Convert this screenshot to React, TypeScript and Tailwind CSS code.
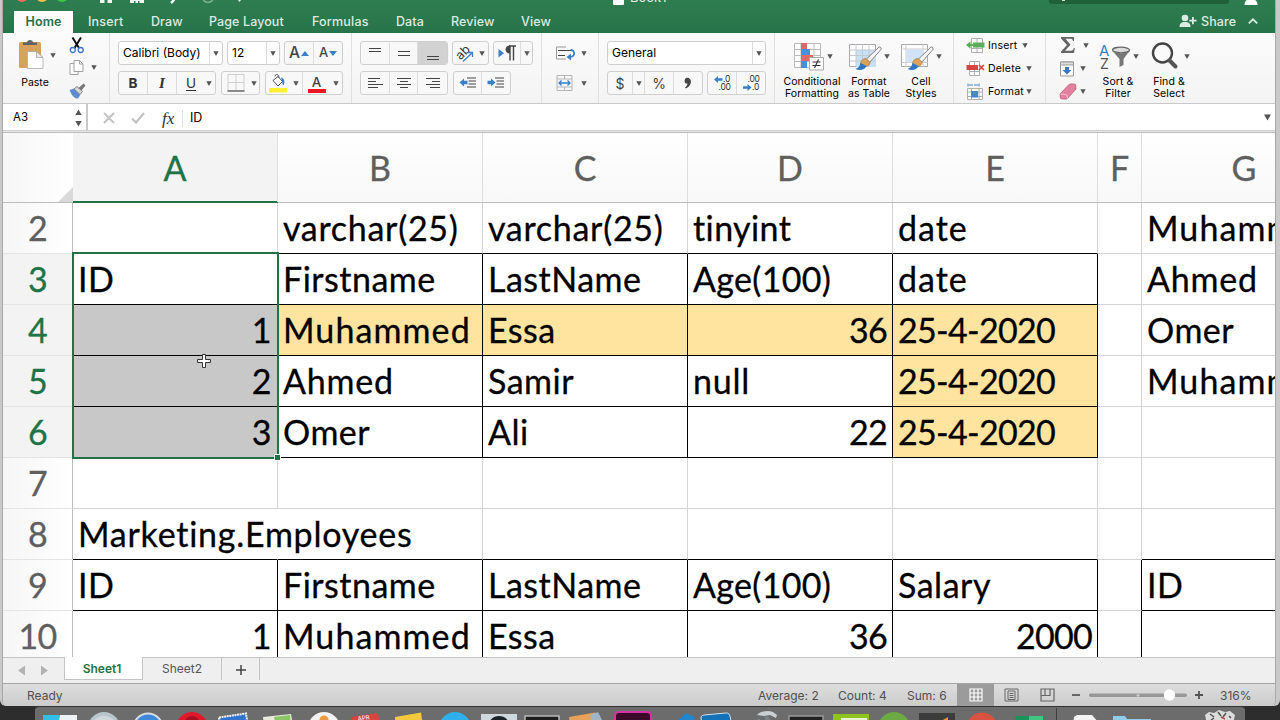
import type { ReactNode } from "react";
import clsx from "clsx";

type CellData = {
  text?: string;
  right?: boolean;
  fill?: string;
  line?: string;
};

const GRAY = "border-r-[#d4d4d4] border-b-[#d4d4d4]";
const BLACK = "border-r-black border-b-black";
const BOTTOM = "border-r-[#d4d4d4] border-b-black";
const SIDE = "border-r-black border-b-[#d4d4d4]";
const OPEN = "border-r-transparent border-b-black";
const YELLOW = "bg-[#ffe4a0]";
const SELECTED = "bg-[#c8c8c8]";

const columns = [
  { name: "A", width: "w-[205px]", active: true },
  { name: "B", width: "w-[205px]" },
  { name: "C", width: "w-[205px]" },
  { name: "D", width: "w-[205px]" },
  { name: "E", width: "w-[205px]" },
  { name: "F", width: "w-[44px]" },
  { name: "G", width: "w-[205px]" },
];

// letter spacing per value, everything else uses the default below
const tracking: Record<string, string> = {
  Muhammed: "tracking-[1.1px]",
  Ahmed: "tracking-[0.8px]",
  date: "tracking-[1px]",
  null: "tracking-[0.8px]",
  "Marketing.Employees": "tracking-[0.75px]",
  "varchar(25)": "tracking-[0.7px]",
  tinyint: "tracking-[0.4px]",
  "Age(100)": "tracking-[0.3px]",
  "25-4-2020": "tracking-[-0.7px]",
  "2000": "tracking-[-0.7px]",
  "36": "tracking-[-0.7px]",
  "22": "tracking-[-0.7px]",
};

const rows: { n: number; active?: boolean; cells: CellData[] }[] = [
  {
    n: 2,
    cells: [
      { line: BOTTOM },
      { text: "varchar(25)", line: BOTTOM },
      { text: "varchar(25)", line: BOTTOM },
      { text: "tinyint", line: BOTTOM },
      { text: "date", line: BOTTOM },
      {},
      { text: "Muhammed" },
    ],
  },
  {
    n: 3,
    active: true,
    cells: [
      { text: "ID", line: BLACK },
      { text: "Firstname", line: BLACK },
      { text: "LastName", line: BLACK },
      { text: "Age(100)", line: BLACK },
      { text: "date", line: BLACK },
      {},
      { text: "Ahmed" },
    ],
  },
  {
    n: 4,
    active: true,
    cells: [
      { text: "1", right: true, fill: SELECTED, line: BLACK },
      { text: "Muhammed", fill: YELLOW, line: BLACK },
      { text: "Essa", fill: YELLOW, line: BLACK },
      { text: "36", right: true, fill: YELLOW, line: BLACK },
      { text: "25-4-2020", fill: YELLOW, line: BLACK },
      {},
      { text: "Omer" },
    ],
  },
  {
    n: 5,
    active: true,
    cells: [
      { text: "2", right: true, fill: SELECTED, line: BLACK },
      { text: "Ahmed", line: BLACK },
      { text: "Samir", line: BLACK },
      { text: "null", line: BLACK },
      { text: "25-4-2020", fill: YELLOW, line: BLACK },
      {},
      { text: "Muhammed" },
    ],
  },
  {
    n: 6,
    active: true,
    cells: [
      { text: "3", right: true, fill: SELECTED, line: BLACK },
      { text: "Omer", line: BLACK },
      { text: "Ali", line: BLACK },
      { text: "22", right: true, line: BLACK },
      { text: "25-4-2020", fill: YELLOW, line: BLACK },
      {},
      {},
    ],
  },
  { n: 7, cells: [{}, {}, {}, {}, {}, {}, {}] },
  {
    n: 8,
    cells: [
      { text: "Marketing.Employees", line: OPEN },
      { line: BOTTOM },
      { line: BOTTOM },
      { line: BOTTOM },
      { line: BOTTOM },
      {},
      { line: BOTTOM },
    ],
  },
  {
    n: 9,
    cells: [
      { text: "ID", line: BLACK },
      { text: "Firstname", line: BLACK },
      { text: "LastName", line: BLACK },
      { text: "Age(100)", line: BLACK },
      { text: "Salary", line: BLACK },
      { line: SIDE },
      { text: "ID", line: BLACK },
    ],
  },
  {
    n: 10,
    cells: [
      { text: "1", right: true, line: BLACK },
      { text: "Muhammed", line: BLACK },
      { text: "Essa", line: BLACK },
      { text: "36", right: true, line: BLACK },
      { text: "2000", right: true, line: BLACK },
      { line: SIDE },
      { line: BLACK },
    ],
  },
];

const Caret = ({ className }: { className?: string }) => (
  <svg viewBox="0 0 6 5" className={clsx("h-[5px] w-[6px] shrink-0", className)}>
    <path d="M0.3 0.3h5.4L3 4.9z" fill="#555" />
  </svg>
);

const Box = ({ className, children }: { className?: string; children: ReactNode }) => (
  <div
    className={clsx(
      "flex h-6 shrink-0 items-stretch overflow-hidden rounded-[3px] border border-[#cfcfcf] bg-[#f8f8f8]",
      className
    )}
  >
    {children}
  </div>
);

const Slot = ({ className, children }: { className?: string; children: ReactNode }) => (
  <div className={clsx("flex shrink-0 items-center justify-center border-[#dcdcdc]", className)}>
    {children}
  </div>
);

const Lines = ({ d }: { d: string }) => (
  <svg viewBox="0 0 16 16" className="h-4 w-4" fill="none" stroke="#444" strokeWidth="1.1">
    <path d={d} />
  </svg>
);

const TitleBar = () => (
  <div className="h-[11px] overflow-hidden">
    <div className="-mt-[11px] flex h-[22px] items-start">
      <div className="flex w-[97px] shrink-0 gap-2 pt-[1px] pl-[13px]">
        <span className="h-3 w-3 rounded-full bg-[#ee6a5f]" />
        <span className="h-3 w-3 rounded-full bg-[#f5bd4f]" />
        <span className="h-3 w-3 rounded-full bg-[#3ec544]" />
      </div>
      <svg viewBox="0 0 150 15" className="h-[15px] w-[150px] shrink-0" fill="#f2f7f3">
        <path d="M0 3h12v11H7.500V10H4.500v4H0z" />
        <path d="M30 3h14v11H30zM34 12h1.500v2H34zM38 12h1.500v2H38z" fillRule="evenodd" />
        <path d="M69 4c6 0 8 5 2 10" fill="none" stroke="#f2f7f3" strokeWidth="2.500" />
        <circle cx="108" cy="8" r="5.500" fill="none" stroke="#7fae92" strokeWidth="1.500" />
        <path d="M138 11h3l-1.500 2z" />
      </svg>
      <div className="ml-[363px] flex w-[100px] shrink-0 items-center gap-[6px]">
        <span className="h-[14px] w-[11px] rounded-[1px] bg-white" />
        <span className="text-[13px] leading-[17px] text-[#e6f0ea]">Book1</span>
      </div>
      <div className="ml-[336px] flex h-[15px] w-[180px] shrink-0 items-end rounded-b-[3px] bg-[#1f6039] pl-[13px]">
        <span className="mb-[3px] h-[2px] w-[3px] bg-[#cfe3d6]" />
        <span className="pl-[12px] text-[12.500px] leading-[16px] text-[#6fa085]">Search Sheet</span>
      </div>
      <svg viewBox="0 0 14 16" className="ml-[15px] h-4 w-[14px] shrink-0" fill="#fff">
        <circle cx="7" cy="6" r="4" />
        <path d="M0.500 16c0-4 2.500-6 6.500-6s6.500 2 6.500 6z" />
      </svg>
    </div>
  </div>
);

const TabBar = () => (
  <div className="flex h-[22px] items-stretch pl-[11px] text-[12.500px] leading-[21px] font-medium tracking-[0.1px] text-[#dcebe1]">
    <div className="w-[59px] shrink-0 bg-[#fbfbfb] text-center font-semibold text-[#25704a]">Home</div>
    <span className="ml-[15px] w-[63px] tracking-[0.2px]">Insert</span>
    <span className="w-[58px]">Draw</span>
    <span className="w-[103px] whitespace-nowrap">Page Layout</span>
    <span className="w-[84px] tracking-[0.2px]">Formulas</span>
    <span className="w-[55px]">Data</span>
    <span className="w-[70px]">Review</span>
    <span className="w-[60px]">View</span>
    <svg viewBox="0 0 18 14" className="mt-[3px] ml-[598px] h-[14px] w-[18px] shrink-0" fill="#dcebe1">
      <circle cx="6" cy="4" r="3.300" />
      <path d="M0.500 13c0-3.500 1.500-5 5.500-5s5.500 1.500 5.500 5z" />
      <path d="M13 3h1.800v2.700H17.500v1.800h-2.700v2.700H13V7.500h-2.700V5.700H13z" />
    </svg>
    <span className="ml-[4px] w-[36px] text-[12.500px]">Share</span>
    <svg viewBox="0 0 10 6" className="mt-[7px] ml-[11px] h-[6px] w-[10px] shrink-0" fill="none" stroke="#dcebe1" strokeWidth="1.800">
      <path d="M0.800 5.300L5 1.300l4.200 4" />
    </svg>
  </div>
);

const ClipboardGroup = () => (
  <div className="flex w-[107px] shrink-0 border-r border-[#e0e0e0] pt-[4px] pl-[14px]">
    <div className="flex w-[36px] flex-col items-center">
      <svg viewBox="0 0 26 32" className="-ml-[8px] h-8 w-[26px]">
        <rect x="1" y="5" width="22" height="26" rx="1.500" fill="#d9a25c" />
        <path d="M5 8V5.500h4C9 2 15 2 15 5.500h4V8z" fill="#636363" />
        <path d="M9.500 14.500h9l6.500 6v11H9.500z" fill="#fff" stroke="#a9a9a9" strokeWidth=".8" />
        <path d="M18.500 14.500v6H25z" fill="#e8e8e8" stroke="#a9a9a9" strokeWidth=".8" />
      </svg>
      <span className="mt-[7px] text-[10.500px] leading-[14px]">Paste</span>
    </div>
    <Caret className="mt-[16px] -ml-[3px]" />
    <div className="ml-[13px] flex w-[18px] flex-col">
      <svg viewBox="0 0 16 17" className="h-[17px] w-4" fill="none">
        <path d="M3.500 0.500L10 11M12 0.500L5.500 11" stroke="#111" strokeWidth="2" />
        <circle cx="3.800" cy="13" r="2.500" stroke="#3f74c4" strokeWidth="1.300" />
        <circle cx="11.700" cy="13" r="2.500" stroke="#3f74c4" strokeWidth="1.300" />
      </svg>
      <svg viewBox="0 0 15 16" className="mt-[6px] h-4 w-[15px]" fill="#fff" stroke="#999" strokeWidth=".9">
        <path d="M1 3.500h5l3 3v8H1z" />
        <path d="M5 0.500h5.500l3.500 3.500v7.500H5z" />
        <path d="M10.500 0.500v3.500H14" fill="none" />
      </svg>
      <svg viewBox="0 0 17 16" className="mt-[7px] h-4 w-[17px]">
        <path d="M0.500 7l4.500-1.500 6.500 6-2.500 4c-3 .5-6.500-3-8.500-8.500z" fill="#5b8fcf" />
        <path d="M5 6l3-2.500 5.500 5L11 11.500z" fill="#d8d8d8" stroke="#777" strokeWidth=".9" />
        <path d="M9.500 5L14.500 .5l2 2-4 5z" fill="#777" />
      </svg>
    </div>
    <Caret className="mt-[28px] ml-[4px]" />
  </div>
);

const FontGroup = () => (
  <div className="flex w-[242px] shrink-0 flex-col gap-[6px] border-r border-[#e0e0e0] pt-[8px] pl-[8px]">
    <div className="flex gap-[4px]">
      <Box className="w-[105px] border-[#bdbdbd] bg-white">
        <span className="w-[90px] pl-[4px] text-[12px] leading-[22px] whitespace-nowrap">Calibri (Body)</span>
        <Slot className="w-[13px] border-l">
          <Caret />
        </Slot>
      </Box>
      <Box className="w-[53px] border-[#bdbdbd] bg-white">
        <span className="w-[38px] pl-[4px] text-[12px] leading-[22px]">12</span>
        <Slot className="w-[13px] border-l">
          <Caret />
        </Slot>
      </Box>
      <Box className="w-[59px]">
        <Slot className="w-[29px] gap-[1px] border-r text-[15.500px] font-medium text-[#444]">
          A
          <svg viewBox="0 0 8 5" className="h-[5px] w-2">
            <path d="M0 5h8L4 0z" fill="#3a80c9" />
          </svg>
        </Slot>
        <Slot className="w-[28px] gap-[1px] text-[13px] font-medium text-[#444]">
          A
          <svg viewBox="0 0 8 5" className="h-[5px] w-2">
            <path d="M0 0h8L4 5z" fill="#3a80c9" />
          </svg>
        </Slot>
      </Box>
    </div>
    <div className="flex gap-[5px]">
      <Box className="w-[98px] text-[13.500px] text-[#333]">
        <Slot className="w-[29px] border-r font-bold">B</Slot>
        <Slot className="w-[29px] border-r font-['Liberation_Serif'] text-[15px] font-bold italic">I</Slot>
        <Slot className="w-[28px] underline underline-offset-2">U</Slot>
        <Slot className="w-[10px] pr-[2px]">
          <Caret />
        </Slot>
      </Box>
      <Box className="w-[39px]">
        <Slot className="w-[27px]">
          <svg viewBox="0 0 18 18" className="h-[18px] w-[18px]" fill="none" stroke="#cfcfcf">
            <path d="M1 16.500V.5h16v16M9 .5v16M1 8.500h16" />
            <path d="M0.500 17h17" stroke="#666" strokeWidth="1.400" />
          </svg>
        </Slot>
        <Slot className="w-[10px]">
          <Caret />
        </Slot>
      </Box>
      <Box className="w-[78px]">
        <Slot className="w-[24px]">
          <svg viewBox="0 0 20 20" className="h-5 w-5">
            <path d="M5 7.500l5-4 4.500 5-4.500 4.500z" fill="#fff" stroke="#555" strokeWidth="1" />
            <path d="M7 3.500c0-3 4-3 4 1.500" fill="none" stroke="#555" />
            <path d="M13 4.500c3 .5 4.500 4 2.500 8-1.500-1-1-3-1.500-4.500z" fill="#3a7cc4" />
            <rect x="1" y="15" width="18" height="4.500" fill="#fdf22d" />
          </svg>
        </Slot>
        <Slot className="w-[13px] border-r">
          <Caret />
        </Slot>
        <Slot className="w-[27px] flex-col pt-[1px]">
          <span className="text-[13.500px] leading-[14px] font-medium text-[#444]">A</span>
          <span className="h-[4px] w-[18px] bg-[#ee1322]" />
        </Slot>
        <Slot className="w-[12px]">
          <Caret />
        </Slot>
      </Box>
    </div>
  </div>
);

const AlignGroup = () => (
  <div className="flex w-[190px] shrink-0 flex-col gap-[6px] border-r border-[#e0e0e0] pt-[8px] pl-[8px]">
    <div className="flex gap-[4px]">
      <Box className="w-[88px]">
        <Slot className="w-[29px] border-r">
          <Lines d="M2 3.500h12M2 6.500h12" />
        </Slot>
        <Slot className="w-[28px] border-r">
          <Lines d="M2 6.500h12M2 10.500h12" />
        </Slot>
        <Slot className="w-[29px] bg-[#d2d2d2]">
          <Lines d="M2 11.500h12M2 14.500h12" />
        </Slot>
      </Box>
      <Box className="w-[37px]">
        <Slot className="w-[23px]">
          <svg viewBox="0 0 20 20" className="h-5 w-5">
            <text x="1" y="13.500" transform="rotate(-45 8 10)" fontSize="12.500" fill="#333">
              ab
            </text>
            <path d="M8 18.500l9-8.500M13 9.500h4.500v4.500" fill="none" stroke="#3a80c9" strokeWidth="1.300" />
          </svg>
        </Slot>
        <Slot className="w-[12px]">
          <Caret />
        </Slot>
      </Box>
      <Box className="w-[40px]">
        <Slot className="w-[27px] border-r">
          <svg viewBox="0 0 20 18" className="h-[18px] w-5">
            <path d="M1.500 5v8.500L7 9.300z" fill="#3a80c9" />
            <path d="M13 2v14.500M16.500 2v14.500M12 2h7" stroke="#444" strokeWidth="1.400" fill="none" />
            <path d="M13 1.500c-6 0-6 8 0 8z" fill="#444" />
          </svg>
        </Slot>
        <Slot className="w-[11px]">
          <Caret />
        </Slot>
      </Box>
    </div>
    <div className="flex gap-[5px]">
      <Box className="w-[88px]">
        <Slot className="w-[29px] border-r">
          <Lines d="M1 3.500h12M1 6.500h8M1 9.500h15M1 12.500h10" />
        </Slot>
        <Slot className="w-[28px] border-r">
          <Lines d="M1 3.500h14M4 6.500h8M1 9.500h14M4 12.500h8" />
        </Slot>
        <Slot className="w-[29px]">
          <Lines d="M1 3.500h14M7 6.500h8M1 9.500h14M5 12.500h10" />
        </Slot>
      </Box>
      <Box className="w-[58px]">
        <Slot className="w-[28px] border-r">
          <svg viewBox="0 0 18 14" className="h-[14px] w-[18px]">
            <path d="M8 2h9M9.500 5h7.500M9.500 8h7.500M8 11h9" stroke="#444" strokeWidth="1.100" />
            <path d="M0.500 6.500L5 2.500v2.300h3.500v3.400H5v2.300z" fill="#3a80c9" />
          </svg>
        </Slot>
        <Slot className="w-[28px]">
          <svg viewBox="0 0 18 14" className="h-[14px] w-[18px]">
            <path d="M8 2h9M9.500 5h7.500M9.500 8h7.500M8 11h9" stroke="#444" strokeWidth="1.100" />
            <path d="M8.500 6.500L4 2.500v2.300H.5v3.400H4v2.300z" fill="#3a80c9" />
          </svg>
        </Slot>
      </Box>
    </div>
  </div>
);

const WrapGroup = () => (
  <div className="flex w-[57px] shrink-0 flex-col gap-[12px] border-r border-[#e0e0e0] pt-[11px] pl-[13px]">
    <div className="flex items-center gap-[5px]">
      <svg viewBox="0 0 21 18" className="h-[18px] w-[21px]" fill="none">
        <path d="M11 3H1.500v12h9.500" stroke="#999" />
        <path d="M3 6.500h13M3 11.500h7" stroke="#444" strokeWidth="1.200" />
        <path d="M15.500 6c5 0 5 7-1 7" stroke="#3a80c9" strokeWidth="1.800" />
        <path d="M11.500 13l4.500-3.500v7z" fill="#3a80c9" />
      </svg>
      <Caret />
    </div>
    <div className="flex items-center gap-[5px]">
      <svg viewBox="0 0 21 18" className="h-[18px] w-[21px]" fill="none">
        <path d="M2 1.500h15v15H2zM2 5h15M2 13h15M9.500 1.500V5M9.500 13v3.500" stroke="#b5b5b5" />
        <path d="M4 9h11M6.500 6.500L4 9l2.500 2.500M12.500 6.500L15 9l-2.500 2.500" stroke="#3a80c9" strokeWidth="1.300" />
      </svg>
      <Caret />
    </div>
  </div>
);

const NumberGroup = () => (
  <div className="flex w-[176px] shrink-0 flex-col gap-[6px] border-r border-[#e0e0e0] pt-[8px] pl-[8px]">
    <Box className="w-[159px] border-[#bdbdbd] bg-white">
      <span className="w-[144px] pl-[4px] text-[12px] leading-[22px]">General</span>
      <Slot className="w-[13px] border-l">
        <Caret />
      </Slot>
    </Box>
    <div className="flex gap-[4px]">
      <Box className="w-[96px] text-[14px] text-[#444]">
        <Slot className="w-[24px]">$</Slot>
        <Slot className="w-[13px] border-r border-l">
          <Caret />
        </Slot>
        <Slot className="w-[29px] border-r">%</Slot>
        <Slot className="w-[28px]">
          <svg viewBox="0 0 8 12" className="h-3 w-2">
            <path d="M2 1c5-1.500 8 6 0 10.500l-1-1c2-1.500 2.500-3 2.500-4C0 7.500 0 2 2 1z" fill="#444" />
          </svg>
        </Slot>
      </Box>
      <Box className="w-[59px] text-[8.500px] leading-[8px] tracking-[-0.3px] text-[#333]">
        <Slot className="w-[29px] flex-col border-r">
          <div className="flex items-center">
            <svg viewBox="0 0 9 7" className="h-[7px] w-[9px]">
              <path d="M0 3.500L4 0v2.300h4.500v2.400H4V7z" fill="#3a80c9" />
            </svg>
            .0
          </div>
          <span className="pl-[5px]">.00</span>
        </Slot>
        <Slot className="w-[28px] flex-col">
          <span className="pl-[5px]">.00</span>
          <div className="flex items-center">
            <svg viewBox="0 0 9 7" className="h-[7px] w-[9px]">
              <path d="M8.500 3.500L4.500 0v2.300H0v2.400h4.500V7z" fill="#3a80c9" />
            </svg>
            .0
          </div>
        </Slot>
      </Box>
    </div>
  </div>
);

const Brush = () => (
  <>
    <path d="M31 5L18 17.500l3.500 3L33 7.500C33.500 5.500 32 4.500 31 5z" fill="#f4f4f4" stroke="#777" strokeWidth=".9" />
    <path d="M18 16.500c-3 0-5 2-5.500 5l5 3c3-.5 4.500-2 4.500-4.500z" fill="#dca25b" stroke="#9a6a30" strokeWidth=".6" />
    <path d="M12.500 21c-.5 3-2 5-5 6 4 2 9.500 1 11-3z" fill="#2f76c2" />
  </>
);

const BigButton = ({ className, icon, label }: { className?: string; icon: ReactNode; label: string[] }) => (
  <div className={clsx("flex shrink-0 flex-col items-center", className)}>
    <div className="flex items-start">
      {icon}
      <Caret className="mt-[12px]" />
    </div>
    {label.map((line) => (
      <span key={line} className="text-[10.500px] leading-[12px] tracking-[0.1px] whitespace-nowrap">
        {line}
      </span>
    ))}
  </div>
);

const StylesGroup = () => (
  <div className="flex w-[179px] shrink-0 border-r border-[#e0e0e0] pt-[9px] pl-[7px]">
    <BigButton
      className="w-[60px]"
      label={["Conditional", "Formatting"]}
      icon={
        <svg viewBox="0 0 33 34" className="ml-[2px] h-[34px] w-[33px]">
          <path d="M0.500 1.500h26v24h-26zM0.500 7.500h26M0.500 13.500h26M0.500 19.500h26M7 1.500v24M20 1.500v24" fill="#fff" stroke="#bbb" />
          <rect x="7" y="1" width="6" height="6" fill="#db6b6b" />
          <rect x="7" y="7" width="9" height="6" fill="#4a8fd9" />
          <rect x="7" y="13" width="12" height="6" fill="#db6b6b" />
          <rect x="7" y="19" width="6" height="7" fill="#4a8fd9" />
          <path d="M15.500 15.500h14v12.500h-14z" fill="#fff" stroke="#aaa" />
          <path d="M18.500 20h8M18.500 23.500h8M24.500 17.500l-4 8.500" stroke="#333" strokeWidth="1.100" />
        </svg>
      }
    />
    <BigButton
      className="w-[54px]"
      label={["Format", "as Table"]}
      icon={
        <svg viewBox="0 0 36 34" className="h-[34px] w-9">
          <path d="M1.500 2.500h26v22h-26z" fill="#fff" stroke="#aaa" />
          <path d="M8 8h20v17H8z" fill="#c9dff5" />
          <path d="M1.500 8h26M1.500 13.500h26M1.500 19h26M8 2.500v22M14.500 2.500v22M21 2.500v22" stroke="#c3c9d0" fill="none" />
          <Brush />
        </svg>
      }
    />
    <BigButton
      className="ml-[1px] w-[48px]"
      label={["Cell", "Styles"]}
      icon={
        <svg viewBox="0 0 36 34" className="h-[34px] w-9">
          <path d="M1.500 2.500h26v22h-26z" fill="#fff" stroke="#aaa" />
          <path d="M1.500 7h26M1.500 20.500h26M6 2.500v22M23 2.500v22" stroke="#ccc" fill="none" />
          <path d="M6.500 7.500h17v13h-17z" fill="#cfe2f6" />
          <Brush />
        </svg>
      }
    />
  </div>
);

const CellsGroup = () => (
  <div className="flex w-[92px] shrink-0 flex-col border-r border-[#e0e0e0] pt-[1px] pl-[12px] text-[10.500px] tracking-[0.2px]">
    <div className="flex h-[23px] items-center">
      <svg viewBox="0 0 19 17" className="h-[17px] w-[19px]">
        <path d="M5.500 1.500h11v14h-11zM5.500 11.500h11M11 1.500v14" fill="#fff" stroke="#b0b0b0" />
        <path d="M7 5.500h11.500v5H7zM0 8l4.500-3.800V7H8v2H4.500v2.800z" fill="#5cad57" />
      </svg>
      <span className="w-[37px] pl-[3px]">Insert</span>
      <Caret />
    </div>
    <div className="flex h-[23px] items-center">
      <svg viewBox="0 0 19 17" className="h-[17px] w-[19px]">
        <path d="M3.500 1.500h10v14h-10zM3.500 11.500h10M8.500 1.500v14" fill="#fff" stroke="#b0b0b0" />
        <path d="M0.500 5h11.500v5H.5z" fill="#d84545" />
        <path d="M13 5l5 5M18 5l-5 5" stroke="#d84545" strokeWidth="1.500" />
      </svg>
      <span className="w-[41px] pl-[3px]">Delete</span>
      <Caret />
    </div>
    <div className="flex h-[23px] items-center">
      <svg viewBox="0 0 19 18" className="h-[18px] w-[19px]">
        <path d="M1.500 5.500h15v11h-15zM1.500 9h15M1.500 13.500h15M5.500 5.500v11M13 5.500v11" fill="#fff" stroke="#b0b0b0" />
        <path d="M5 8h7v6.500H5z" fill="#4a86cc" />
        <path d="M2 .5v3M13 .5v3M3 2h9" stroke="#4a86cc" strokeDasharray="4 1" />
      </svg>
      <span className="w-[41px] pl-[3px]">Format</span>
      <Caret />
    </div>
  </div>
);

const EditingGroup = () => (
  <div className="flex shrink-0 pl-[13px]">
    <div className="flex w-[32px] flex-col">
      <div className="flex h-[24px] items-center gap-[7px]">
        <svg viewBox="0 0 16 18" className="ml-[1px] h-[18px] w-4">
          <path d="M1 1h13v4h-1c-.5-2-1-2.300-3-2.300H5.500l5 6-5.500 6h5.500c2 0 2.800-.5 3.300-2.700h1L14 17H1v-1.500l6-6.500-6-6.500z" fill="#666" />
        </svg>
        <Caret />
      </div>
      <div className="flex h-[23px] items-center gap-[5px]">
        <svg viewBox="0 0 16 16" className="h-4 w-4">
          <path d="M1.500 1h13v14h-13z" fill="#fff" stroke="#999" />
          <path d="M1.500 1h13v3h-13z" fill="#ddd" stroke="#999" />
          <path d="M6 6h4v3h2.500L8 13.500 3.500 9H6z" fill="#3a78c3" />
        </svg>
        <Caret />
      </div>
      <div className="flex h-[23px] items-center gap-[3px]">
        <svg viewBox="0 0 18 17" className="h-[17px] w-[18px]">
          <path d="M1 11L10 1.500c1-.8 5-.8 6.500 0L17 6l-8.500 9.500C7 16.500 3 16 1.500 15.500z" fill="#e57f9e" stroke="#c15b7c" strokeWidth=".8" />
          <path d="M1.500 11.500c2-.8 5 0 6.500.7l.5 3.300" fill="none" stroke="#f6c3d1" />
        </svg>
        <Caret />
      </div>
    </div>
    <BigButton
      className="ml-[3px] w-[48px] pt-[9px]"
      label={["Sort &", "Filter"]}
      icon={
        <svg viewBox="0 0 34 34" className="ml-px h-[34px] w-[34px]">
          <text x="0" y="13.500" fontSize="15" fill="#3a80c9">
            A
          </text>
          <text x="1" y="26.500" fontSize="14" fill="#555">
            Z
          </text>
          <ellipse cx="22" cy="8" rx="8.500" ry="2.800" fill="#ddd" stroke="#666" strokeWidth="1.300" />
          <path d="M13.500 9l7 8v8l4-2v-6l6-8c-3 3-13 3-17 0z" fill="#777" />
        </svg>
      }
    />
    <BigButton
      className="ml-[3px] w-[48px] pt-[9px]"
      label={["Find &", "Select"]}
      icon={
        <svg viewBox="0 0 34 34" className="ml-px h-[34px] w-[34px]">
          <circle cx="12.500" cy="11" r="9.500" fill="#fafafa" stroke="#444" strokeWidth="2.400" />
          <path d="M19.500 18.500l6 6" stroke="#555" strokeWidth="4" strokeLinecap="round" />
        </svg>
      }
    />
  </div>
);

const FormulaBar = () => (
  <div className="flex h-[27px] items-stretch border-t border-[#c9c9c9] bg-white">
    <div className="flex w-[85px] items-center justify-between border-r-2 border-[#c9c9c9] pt-[2px] pr-[4px] pl-[10px] text-[11.500px]">
      A3
      <svg viewBox="0 0 7 18" className="h-[18px] w-[7px]" fill="#555">
        <path d="M0.300 6h6.400L3.500 .5zM.3 12h6.400l-3.200 5.500z" />
      </svg>
    </div>
    <div className="flex flex-1 items-center pt-[2px]">
      <svg viewBox="0 0 12 12" className="ml-[15px] h-3 w-3" stroke="#c3c3c3" strokeWidth="2">
        <path d="M1 1l10 10M11 1L1 11" />
      </svg>
      <svg viewBox="0 0 14 12" className="ml-[16px] h-3 w-[14px]" fill="none" stroke="#c3c3c3" strokeWidth="2.200">
        <path d="M1 6.500l4 4L13 1" />
      </svg>
      <span className="ml-[17px] w-[21px] border-r border-[#ddd] font-['Liberation_Serif'] text-[17px] leading-[17px] text-[#333] italic">
        fx
      </span>
      <span className="ml-[7px] text-[12.500px]">ID</span>
    </div>
    <svg viewBox="0 0 7 7" className="mt-[10px] mr-[4px] h-[7px] w-[7px]">
      <path d="M0 .5h7l-3.500 6z" fill="#555" />
    </svg>
  </div>
);

const Sheet = () => (
  <div className="relative h-[524px] overflow-hidden bg-white font-[Lato,'Noto_Sans',sans-serif] text-[34px] text-black [font-variant-ligatures:none] [-webkit-text-stroke:0.3px]">
    <div className="flex h-[70px] w-[1400px] border-b border-[#bdbdbd]">
      <div className="flex w-[70px] shrink-0 items-end justify-end bg-linear-to-r from-[#f6f6f6] to-white">
        <svg viewBox="0 0 15 15" className="h-[15px] w-[15px]">
          <path d="M15 0v15H0z" fill="#d9d9d9" />
        </svg>
      </div>
      {columns.map((col) => (
        <div
          key={col.name}
          className={clsx(
            "shrink-0 border-r border-[#dedede] text-center leading-[70px]",
            col.width,
            col.active ? "bg-[#f3f3f3] text-[#217346] shadow-[0_1px_0_#217346,inset_0_-1px_0_#217346]" : "bg-linear-to-b from-white to-[#f8f8f8] text-[#5f5f5f]"
          )}
        >
          {col.name}
        </div>
      ))}
    </div>
    {rows.map((row) => (
      <div key={row.n} className="flex h-[51px] w-[1400px]">
        <div
          className={clsx(
            "w-[70px] shrink-0 border-r border-b border-r-[#bdbdbd] border-b-[#e4e4e4] text-center leading-[50px] tracking-[-0.7px]",
            row.active ? "bg-[#f3f3f3] text-[#217346]" : "bg-linear-to-r from-[#f6f6f6] to-white text-[#5f5f5f]"
          )}
        >
          {row.n}
        </div>
        {row.cells.map((cell, i) => (
          <div
            key={i}
            className={clsx(
              "shrink-0 border-r border-b pr-[5px] pl-[5px] leading-[50px] whitespace-nowrap",
              columns[i].width,
              cell.line ?? GRAY,
              cell.fill,
              tracking[cell.text ?? ""] ?? "tracking-[0.5px]",
              cell.right && "text-right"
            )}
          >
            {cell.text}
          </div>
        ))}
      </div>
    ))}
    {/* selection frame and fill handle */}
    <div className="absolute top-[119px] left-[69px] h-[207px] w-[207px] border-2 border-[#217346]" />
    <div className="absolute top-[322px] left-[272px] h-[5px] w-[5px] bg-[#217346] ring-1 ring-white" />
    <svg viewBox="0 0 16 16" className="absolute top-[220px] left-[193px] h-4 w-4">
      <path d="M6.500 1.500h3V6.500h5v3h-5v5h-3v-5h-5v-3h5z" fill="#fff" stroke="#333" />
    </svg>
  </div>
);

const SheetTabs = () => (
  <div className="flex h-[26px] border-t border-[#c4c4c4] bg-[#efefef] text-[12px] leading-[22px] text-[#555]">
    <svg viewBox="0 0 32 11" className="mt-[7px] ml-[14px] h-[11px] w-8" fill="#b3b3b3">
      <path d="M8 .5v10L1 5.500zM24 .5v10l7-5z" />
    </svg>
    <div className="-mt-px ml-[15px] h-[23px] w-[79px] border-r border-b border-l border-[#c4c4c4] bg-white pr-[3px] text-center text-[12px] leading-[24px] font-semibold text-[#217346]">
      Sheet1
    </div>
    <div className="h-[22px] w-[79px] border-r border-[#c4c4c4] text-center">Sheet2</div>
    <div className="flex h-[22px] w-[38px] items-center justify-center border-r border-[#c4c4c4]">
      <svg viewBox="0 0 10 10" className="mt-[2px] h-[10px] w-[10px]" stroke="#444" strokeWidth="1.500">
        <path d="M5 0v10M0 5h10" />
      </svg>
    </div>
  </div>
);

const StatusBar = () => (
  <div className="flex h-[23px] items-stretch border-t border-[#a5a5a5] bg-linear-to-b from-[#dedede] to-[#cbcbcb] text-[12px] leading-[23px] text-[#505050]">
    <span className="w-[755px] pl-[24px]">Ready</span>
    <span className="w-[80px]">Average: 2</span>
    <span className="w-[69px]">Count: 4</span>
    <span className="w-[50px]">Sum: 6</span>
    <div className="flex w-[37px] items-center justify-center bg-[#9b9b9b]">
      <svg viewBox="0 0 14 14" className="h-[14px] w-[14px]" fill="none" stroke="#fff" strokeWidth="1.200">
        <path d="M1 1h12v12H1zM1 5h12M1 9h12M5 1v12M9 1v12" />
      </svg>
    </div>
    <div className="flex w-[78px] items-center gap-[21px] pl-[10px]">
      <svg viewBox="0 0 15 14" className="h-[14px] w-[15px] shrink-0" fill="none" stroke="#666">
        <path d="M1 1h13v12H1zM4 3h7v8.500H4zM5.500 5.500h4M5.500 7.500h4M5.500 9.500h4" />
      </svg>
      <svg viewBox="0 0 15 14" className="h-[14px] w-[15px] shrink-0" fill="none" stroke="#666" strokeWidth="1.200">
        <path d="M1 1h13v12H1zM5 1v6.500h5V1M1 7.500h4" />
      </svg>
    </div>
    <div className="flex w-[148px] items-center">
      <span className="h-[2px] w-[8px] bg-[#666]" />
      <svg viewBox="0 0 98 14" className="ml-[9px] h-[14px] w-[98px] shrink-0">
        <rect y="5.500" width="98" height="3.500" rx="1.700" fill="#989898" />
        <circle cx="49" cy="7.200" r="1.500" fill="#c6c6c6" />
        <circle cx="80.500" cy="7" r="5.700" fill="#fff" />
      </svg>
      <svg viewBox="0 0 8 8" className="ml-[8px] h-2 w-2 shrink-0" stroke="#555" strokeWidth="1.800">
        <path d="M4 0v8M0 4h8" />
      </svg>
    </div>
    <span>316%</span>
  </div>
);

// only the top edge of every dock icon is visible
const dockIcons: ReactNode[] = [
  <><path d="M5 3h17l-2 11H5z" fill="#2fc0ea" /><path d="M22 3h17v11H20z" fill="#eef2f5" /></>,
  <><circle cx="22" cy="16" r="16" fill="#b9c6cd" /><circle cx="22" cy="18" r="14" fill="#cfd8dc" /></>,
  <><circle cx="22" cy="16" r="15.500" fill="#d5dce2" /><circle cx="22" cy="16" r="13.500" fill="#3f87d8" /></>,
  <><circle cx="22" cy="16" r="16" fill="#e3182d" /><ellipse cx="22" cy="15" rx="9" ry="11" fill="#a80f1f" /></>,
  <path d="M5 5.500l27-4 2 13H6z" fill="#3173cf" stroke="#f1f1f1" strokeWidth="2" strokeDasharray="2 .6" />,
  <><path d="M5 5l28-3 2 12H6z" fill="#e9ecd9" /><path d="M16 5l16-2 1 11H18z" fill="#8cc568" /></>,
  <><circle cx="22" cy="16" r="16" fill="#f3f3f3" /><circle cx="22" cy="8" r="4.500" fill="#eb9a3e" /><circle cx="15" cy="12" r="4" fill="#d9cc55" /></>,
  <><path d="M5 5l27-4 2 13H6z" fill="#d9443f" /><text x="12" y="8" fontSize="6" fill="#fff" transform="rotate(-8 18 8)">APR</text></>,
  <path d="M5 5l26-4.500 2 13.500H5z" fill="#f4c93c" />,
  <circle cx="21" cy="16" r="16" fill="#2fb0ec" />,
  <><path d="M3 2h36v12H3z" fill="#cfd8dd" /><circle cx="21" cy="15" r="11" fill="#1d2226" /></>,
  <path d="M3 4h34v12H3z" fill="#1e1e1e" stroke="#b9b9b9" strokeWidth="1.500" />,
  <><path d="M3 5l26-4.500 2 14H4z" fill="#e8a258" /><path d="M24 3l8-3 7 14H26z" fill="#9fb4c4" /></>,
  <rect x="5" y="0" width="36" height="20" rx="4" fill="#3b0a2a" stroke="#d632a4" strokeWidth="2" />,
  <path d="M18 14L32 1l8 4v9z" fill="#1e87cf" />,
  <path d="M3 6c0-2 1-2.500 3-3l22-2c3 0 3 1 4 3l2 10H4z" fill="#1472b8" stroke="#d3e2ee" />,
  <><path d="M5 14l12-7 9 7z" fill="#5da5d9" /><path d="M15 3c4-4 11-5 16-3l4 3-1 3-6-3-6 1z" fill="#c8ced2" /><path d="M22 5l5 9h5l-6-10z" fill="#7b8388" /></>,
  <path d="M3 4h34v12H3z" fill="#222" stroke="#999" strokeWidth="1.500" />,
  <><path d="M3 2h36v12H3z" fill="#8fc31f" /><path d="M11 6h26v8H11z" fill="#e9f3d2" /></>,
  <circle cx="20" cy="16" r="16" fill="#6cab43" />,
  <><path d="M1 1h36v13H1z" fill="#3c3c3c" /><path d="M18 12l12-7v8z" fill="#f0932b" /></>,
  <circle cx="20" cy="16" r="15.500" fill="#d95140" />,
  <><path d="M9 4h14v10H9z" fill="#17935b" /><path d="M23 4h14v10H23z" fill="#3fc683" /></>,
];

const Dock = () => (
  <div className="flex h-[14px] items-stretch bg-[#2d2d2d] pl-[35px]">
    <div className="flex w-[1210px] items-stretch rounded-t-[4px] border-t border-[#333] bg-[#6c6c6c] pt-[1px] pl-[3px]">
      {dockIcons.map((icon, i) => (
        <svg key={i} viewBox="0 -4 44 12" className="h-3 w-11 shrink-0">
          {icon}
        </svg>
      ))}
      <span className="ml-[6px] w-px bg-[#3f3f3f]" />
      <svg viewBox="0 -4 30 12" className="ml-[15px] h-3 w-[30px] shrink-0">
        <path d="M2 5l3-2h15l7 8v3H1z" fill="#f4f4f4" />
      </svg>
      <svg viewBox="0 -4 40 12" className="ml-[10px] h-3 w-10 shrink-0">
        <path d="M1 4h12l2 3h24v7H1z" fill="#8fcdea" />
      </svg>
      <svg viewBox="0 -4 32 12" className="ml-[52px] h-3 w-8 shrink-0">
        <path d="M1 3l4-3 5 1 5-3 6 2 5-1 5 4-2 9H3z" fill="#dcdcdc" />
        <path d="M6 2l4 3M14 0l3 4M22 1l-3 4M10 6l-3 2M25 4l2 2" stroke="#555" strokeWidth="1.500" />
        <path d="M17 5l4 2" stroke="#b5463c" strokeWidth="1.500" />
      </svg>
    </div>
  </div>
);

const App = () => {
  return (
    <div className="flex h-[720px] w-[1280px] flex-col overflow-hidden bg-[#2d2d2d] font-[Inter,sans-serif] text-black">
      <div className="h-[706px] bg-[#2d2d2d]">
        <div className="h-[706px] rounded-b-[6px] bg-[#c9c9c9] pr-[4px] pl-[2px]">
          <div className="h-[706px] overflow-hidden rounded-b-[5px] border-r border-l border-[#a8a8a8]">
            <header className="h-[33px] bg-linear-to-b from-[#2e7d50] to-[#28744a]">
              <TitleBar />
              <TabBar />
            </header>
            <div className="flex h-[70px] items-stretch bg-linear-to-b from-[#fbfbfb] to-[#f4f4f4]">
              <ClipboardGroup />
              <FontGroup />
              <AlignGroup />
              <WrapGroup />
              <NumberGroup />
              <StylesGroup />
              <CellsGroup />
              <EditingGroup />
            </div>
            <FormulaBar />
            <div className="h-[3px] border-t border-b border-t-[#d0d0d0] border-b-[#bdbdbd] bg-[#e6e6e6]" />
            <Sheet />
            <SheetTabs />
            <StatusBar />
          </div>
        </div>
      </div>
      <Dock />
    </div>
  );
};

export default App;
